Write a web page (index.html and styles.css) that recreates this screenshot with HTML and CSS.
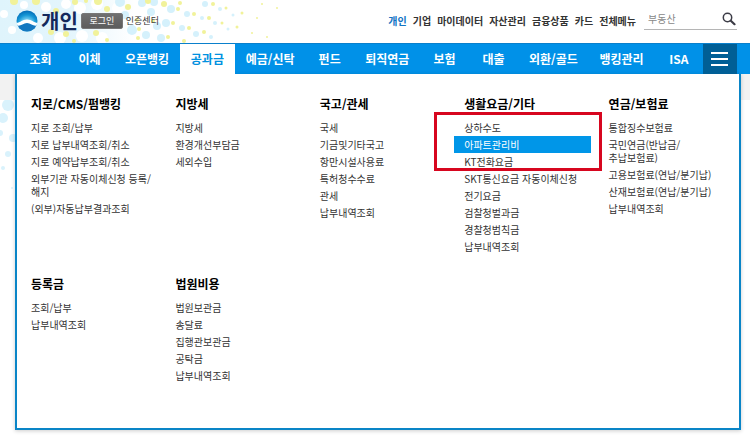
FILE: index.html
```html
<!DOCTYPE html>
<html lang="ko">
<head>
  <meta charset="UTF-8">
  <meta name="viewport" content="width=device-width, initial-scale=1.0">
  <title>개인뱅킹 - 공과금</title>
  <link rel="stylesheet" href="styles.css">
</head>
<body>

  <!-- Background dots -->
  <svg class="dots" width="340" height="200" viewBox="0 0 340 200" aria-hidden="true">
    <defs>
      <linearGradient id="fade">
        <stop offset="0" stop-color="#dff4fc"/>
        <stop offset="0.5" stop-color="#e3f5fc"/>
        <stop offset="1" stop-color="#ffffff"/>
      </linearGradient>
    </defs>
    <rect width="135" height="43" fill="url(#fade)"/>
    <g fill="#ffffff">
      <circle cx="4" cy="14" r="4"/><circle cx="12" cy="30" r="4"/><circle cx="24" cy="5" r="4"/>
      <circle cx="46" cy="7" r="5"/><circle cx="38" cy="38" r="5"/><circle cx="60" cy="38" r="6"/>
      <circle cx="66" cy="4" r="5"/><circle cx="80" cy="8" r="6"/><circle cx="82" cy="36" r="6"/>
      <circle cx="97" cy="4" r="6"/><circle cx="102" cy="38" r="6"/><circle cx="118" cy="8" r="6"/>
    </g>
    <g fill="#d5f1fc">
      <circle cx="120" cy="2" r="5"/><circle cx="125" cy="15" r="4"/><circle cx="132" cy="30" r="5"/>
      <circle cx="142" cy="3" r="4"/><circle cx="154" cy="2" r="4"/><circle cx="151" cy="12" r="4"/>
      <circle cx="157" cy="26" r="4"/><circle cx="171" cy="9" r="4"/><circle cx="166" cy="23" r="4"/>
      <circle cx="161" cy="38" r="4"/><circle cx="146" cy="35" r="4"/><circle cx="187" cy="14" r="3"/>
      <circle cx="182" cy="28" r="3"/><circle cx="196" cy="34" r="3"/><circle cx="205" cy="4" r="3"/>
      <circle cx="202" cy="18" r="2"/><circle cx="215" cy="23" r="2"/><circle cx="220" cy="9" r="2"/>
      <circle cx="211" cy="37" r="2"/><circle cx="233" cy="15" r="1.5"/><circle cx="228" cy="29" r="1.5"/>
    </g>
    <g fill="#f1f29a">
      <circle cx="14" cy="1" r="4"/><circle cx="36" cy="1" r="4"/><circle cx="56" cy="11" r="3"/>
      <circle cx="75" cy="2" r="3"/><circle cx="86" cy="1" r="2"/><circle cx="98" cy="1" r="4"/>
      <circle cx="107" cy="9" r="3"/><circle cx="128" cy="7" r="3"/><circle cx="148" cy="1" r="3"/>
      <circle cx="164" cy="4" r="3"/><circle cx="51" cy="32" r="3"/><circle cx="66" cy="34" r="3"/>
      <circle cx="74" cy="41" r="2"/><circle cx="96" cy="33" r="3"/><circle cx="107" cy="40" r="2"/>
      <circle cx="137" cy="20" r="2"/><circle cx="139" cy="29" r="2"/><circle cx="138" cy="38" r="2"/>
      <circle cx="153" cy="21" r="2"/><circle cx="178" cy="9" r="2"/><circle cx="173" cy="23" r="2"/>
      <circle cx="168" cy="37" r="2"/><circle cx="180" cy="3" r="2"/><circle cx="194" cy="14" r="2"/>
      <circle cx="189" cy="28" r="2"/><circle cx="184" cy="41" r="2"/><circle cx="213" cy="4" r="2"/>
      <circle cx="209" cy="18" r="2"/><circle cx="204" cy="32" r="2"/><circle cx="226" cy="8" r="1.5"/>
      <circle cx="222" cy="23" r="1.5"/><circle cx="242" cy="13" r="1.5"/><circle cx="237" cy="27" r="1.5"/>
      <circle cx="262" cy="4" r="1"/><circle cx="257" cy="18" r="1"/><circle cx="252" cy="33" r="1"/>
      <circle cx="277" cy="8" r="1"/><circle cx="267" cy="37" r="1"/>
    </g>
    <g fill="#d9f2fc">
      <circle cx="8" cy="105" r="6"/><circle cx="3" cy="118" r="5"/><circle cx="13" cy="138" r="4"/>
      <circle cx="0" cy="133" r="3"/><circle cx="8" cy="154" r="3"/><circle cx="3" cy="168" r="2"/>
      <circle cx="12" cy="188" r="1"/>
    </g>
  </svg>

  <!-- Top bar -->
  <header class="header">
    <a class="logo" href="#">
      <svg width="22" height="22" viewBox="0 0 22 22" aria-hidden="true">
        <defs>
          <radialGradient id="sky" cx="0.5" cy="0.65" r="0.65">
            <stop offset="0.25" stop-color="#8fdcf8"/>
            <stop offset="0.65" stop-color="#1597d6"/>
            <stop offset="1" stop-color="#0066b3"/>
          </radialGradient>
          <clipPath id="ball"><circle cx="11" cy="11" r="10.5"/></clipPath>
        </defs>
        <g clip-path="url(#ball)">
          <rect width="22" height="22" fill="url(#sky)"/>
          <path d="M0 13C5 12.500 6 9.500 11 9.500s6 3 11 3.500v4H0z" fill="#fff"/>
          <path d="M0 16C6 16 7.500 13 11 13s5 3 11 3v6H0z" fill="#1478c0"/>
        </g>
      </svg>
      <span class="logo-text">개인</span>
    </a>
    <button class="login" type="button">로그인</button>
    <a class="cert" href="#">인증센터</a>

    <nav class="top-menu">
      <a class="on" href="#">개인</a>
      <a href="#">기업</a>
      <a href="#">마이데이터</a>
      <a href="#">자산관리</a>
      <a href="#">금융상품</a>
      <a href="#">카드</a>
      <a href="#">전체메뉴</a>
    </nav>

    <form class="search">
      <input type="text" placeholder="부동산" aria-label="검색어">
      <button type="button" aria-label="검색">
        <svg width="14" height="14" viewBox="0 0 14 14" fill="none" stroke="#3c3c46" aria-hidden="true">
          <circle cx="5.500" cy="5.500" r="4.200" stroke-width="1.500"/>
          <path d="M8.800 8.800l3.700 3.400" stroke-width="2.200" stroke-linecap="round"/>
        </svg>
      </button>
    </form>
  </header>

  <!-- Main menu -->
  <nav class="gnb">
    <a href="#">조회</a>
    <a href="#">이체</a>
    <a href="#">오픈뱅킹</a>
    <a class="active" href="#">공과금</a>
    <a href="#">예금/신탁</a>
    <a href="#">펀드</a>
    <a href="#">퇴직연금</a>
    <a href="#">보험</a>
    <a href="#">대출</a>
    <a href="#">외환/골드</a>
    <a href="#">뱅킹관리</a>
    <a href="#">ISA</a>
    <button class="all-menu" type="button" aria-label="전체메뉴">
      <svg width="18" height="16" viewBox="0 0 18 16" stroke="#fff" stroke-width="2" aria-hidden="true">
        <path d="M0 2h17M0 8h17M0 14h17"/>
      </svg>
    </button>
  </nav>

  <!-- Sub menu -->
  <main class="content">
    <div class="panel">
      <section class="group">
        <h2>지로/CMS/펌뱅킹</h2>
        <ul>
          <li><a href="#">지로 조회/납부</a></li>
          <li><a href="#">지로 납부내역조회/취소</a></li>
          <li><a href="#">지로 예약납부조회/취소</a></li>
          <li><a href="#">외부기관 자동이체신청 등록/<br>해지</a></li>
          <li><a href="#">(외부)자동납부결과조회</a></li>
        </ul>
      </section>
      <section class="group">
        <h2>지방세</h2>
        <ul>
          <li><a href="#">지방세</a></li>
          <li><a href="#">환경개선부담금</a></li>
          <li><a href="#">세외수입</a></li>
        </ul>
      </section>
      <section class="group">
        <h2>국고/관세</h2>
        <ul>
          <li><a href="#">국세</a></li>
          <li><a href="#">기금및기타국고</a></li>
          <li><a href="#">항만시설사용료</a></li>
          <li><a href="#">특허청수수료</a></li>
          <li><a href="#">관세</a></li>
          <li><a href="#">납부내역조회</a></li>
        </ul>
      </section>
      <section class="group marked">
        <h2>생활요금/기타</h2>
        <ul>
          <li><a href="#">상하수도</a></li>
          <li class="selected"><a href="#">아파트관리비</a></li>
          <li><a href="#">KT전화요금</a></li>
          <li><a href="#">SKT통신요금 자동이체신청</a></li>
          <li><a href="#">전기요금</a></li>
          <li><a href="#">검찰청벌과금</a></li>
          <li><a href="#">경찰청범칙금</a></li>
          <li><a href="#">납부내역조회</a></li>
        </ul>
      </section>
      <section class="group">
        <h2>연금/보험료</h2>
        <ul>
          <li><a href="#">통합징수보험료</a></li>
          <li><a href="#">국민연금(반납금/<br>추납보험료)</a></li>
          <li><a href="#">고용보험료(연납/분기납)</a></li>
          <li><a href="#">산재보험료(연납/분기납)</a></li>
          <li><a href="#">납부내역조회</a></li>
        </ul>
      </section>
      <section class="group">
        <h2>등록금</h2>
        <ul>
          <li><a href="#">조회/납부</a></li>
          <li><a href="#">납부내역조회</a></li>
        </ul>
      </section>
      <section class="group">
        <h2>법원비용</h2>
        <ul>
          <li><a href="#">법원보관금</a></li>
          <li><a href="#">송달료</a></li>
          <li><a href="#">집행관보관금</a></li>
          <li><a href="#">공탁금</a></li>
          <li><a href="#">납부내역조회</a></li>
        </ul>
      </section>
    </div>
  </main>

</body>
</html>
```
FILE: styles.css
```css
*, *::after {
  margin: 0;
  padding: 0;
  box-sizing: border-box;
}

body {
  position: relative;
  background-color: #fff;
  color: #333;
  font-family: 'Noto Sans CJK KR', 'Noto Sans', sans-serif;
  font-size: 10px;
}

a {
  color: inherit;
  text-decoration: none;
}

button, input {
  border: none;
  background: none;
  font-family: inherit;
}

button {
  cursor: pointer;
}

svg {
  display: block;
}

/* Decoration behind the page */
.dots {
  position: absolute;
  top: 0;
  left: 0;
  z-index: -1;
}

/* Top bar */
.header {
  display: flex;
  align-items: center;
  height: 43px;
  padding: 0 13px 2px 16px;
}

.logo {
  display: flex;
  align-items: center;
  gap: 3px;
}

.logo-text {
  font-size: 20px;
  line-height: 24px;
  font-weight: bold;
  color: #14295c;
}

.login {
  width: 42px;
  height: 16px;
  margin-left: 3px;
  border: 1px solid #777;
  border-radius: 2px;
  background: linear-gradient(#707070, #5c5c5c);
  color: #fff;
  font-size: 9px;
  line-height: 13px;
}

.cert {
  margin-left: 3px;
  font-size: 9px;
}

.top-menu {
  display: flex;
  gap: 6px;
  margin-left: auto;
  font-weight: bold;
}

.top-menu .on {
  color: #1274c4;
}

.search {
  display: flex;
  align-items: center;
  width: 93px;
  height: 18px;
  margin-left: 8px;
  padding: 0 1px 3px 4px;
  border-bottom: 1px solid #b5b5b5;
}

.search input {
  flex: 1;
  min-width: 0;
  font-size: 10px;
  outline: none;
}

.search input::placeholder {
  color: #888;
}

/* Main menu */
.gnb {
  display: flex;
  height: 31px;
  padding: 0 13px 0 16px;
  border-top: 1px solid #0a80cc;
  background-color: #0091e8;
  color: #fff;
  font-size: 12px;
  font-weight: bold;
  line-height: 30px;
}

.gnb a {
  min-width: 49px;
  padding: 0 11px;
  text-align: center;
  white-space: nowrap;
}

.gnb .active {
  background-color: #fff;
  color: #0091e0;
}

.all-menu {
  display: flex;
  align-items: center;
  justify-content: center;
  width: 34px;
  margin-left: auto;
  background-color: #005f96;
}

/* Sub menu */
.content {
  padding: 0 9px 13px 15px;
  background: linear-gradient(#f2f2f2, #f2f2f2) no-repeat 0 0 / 100% 26px;
}

.panel {
  display: grid;
  grid-template-columns: repeat(5, 1fr);
  gap: 20px 22px;
  padding: 21px 8px 44px 14px;
  border: 2px solid #0a85c7;
  border-top: none;
  background-color: #fff;
  box-shadow: 0 1px 4px rgba(0, 0, 0, 0.2);
}

.group h2 {
  margin-bottom: 6px;
  font-size: 12px;
  line-height: 18px;
  color: #000;
}

.group ul {
  list-style: none;
}

.group li {
  padding: 2px 0;
  line-height: 13px;
  white-space: nowrap;
}

.group .selected {
  margin: 0 -4px 0 -10px;
  padding-left: 10px;
  background-color: #0096e8;
  color: #fff;
}

/* Red frame around the selected item */
.marked {
  position: relative;
}

.marked::after {
  content: '';
  position: absolute;
  top: 17px;
  left: -30px;
  right: -15px;
  height: 59px;
  border: 3px solid #d7061f;
  pointer-events: none;
}
```
